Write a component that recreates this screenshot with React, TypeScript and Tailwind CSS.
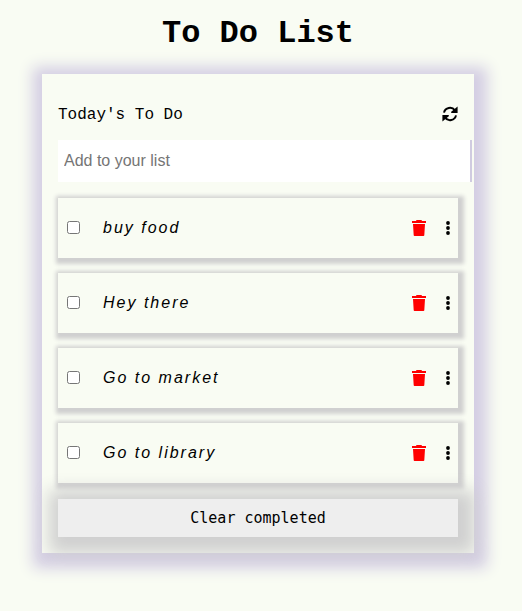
import React from "react";

const items = ["buy food", "Hey there", "Go to market", "Go to library"];

function RefreshIcon() {
  return (
    <svg viewBox="0 0 16 16" className="mt-px size-4" aria-hidden="true">
      <path d="M2 6.6A6.1 6.1 0 0 1 12.9 4.4M14 9.4A6.1 6.1 0 0 1 3.1 11.6" fill="none" stroke="currentColor" strokeWidth="2" />
      <path d="M15.6.6V6.9H9.2V5.7ZM.4 15.4V9.1H6.8V10.3Z" fill="currentColor" />
    </svg>
  );
}

function TrashIcon() {
  return (
    <svg viewBox="0 0 14 16" className="h-4 w-[14px] text-[#ff0000]" fill="currentColor" aria-hidden="true">
      <path d="M4 1 4.5 0H9.5L10 1H14V3H0V1ZM1 4H13L12.3 15.3Q12.2 16 11.5 16H2.5Q1.8 16 1.7 15.3Z" />
    </svg>
  );
}

function DotsIcon() {
  return (
    <svg viewBox="0 0 6 16" className="ml-[19px] h-4 w-[6px]" fill="currentColor" aria-hidden="true">
      <circle cx="3" cy="3" r="1.9" />
      <circle cx="3" cy="8" r="1.9" />
      <circle cx="3" cy="13" r="1.9" />
    </svg>
  );
}

export default function App() {
  return (
    <div className="flex h-[611px] w-[522px] flex-col overflow-hidden bg-[#f9fcf3] text-black">
      <h1 className="mt-4 h-9 pr-1.5 text-center font-['Liberation_Mono',monospace] text-[32px] leading-9 font-bold">
        To Do List
      </h1>
      <main className="mt-[22px] ml-[42px] flex h-[479px] w-[432px] flex-col bg-[#f9fcf3] px-4 pt-[30px] shadow-[2px_4px_14px_11px_#d3cde3]">
        <header className="flex h-9 items-start justify-between pt-px font-['Liberation_Mono',monospace] text-base leading-5">
          <span>Today's To Do</span>
          <RefreshIcon />
        </header>
        <input
          placeholder="Add to your list"
          className="h-[42px] w-[414px] shrink-0 border-r-2 border-[#d0cbe0] bg-white px-1.5 font-['Liberation_Sans',sans-serif] text-base outline-none placeholder:text-[#757575]"
        />
        <ul className="mt-4 flex flex-col gap-[15px]">
          {items.map((item) => (
            <li key={item} className="flex h-[60px] items-center bg-[#f9fcf3] pr-[7px] pl-[9px] shadow-[2px_2px_4px_4px_#d0d0d0]">
              <input type="checkbox" className="mb-[2px] size-[13px]" />
              <span className="ml-[23px] flex-1 font-['Liberation_Sans',sans-serif] text-base tracking-[2px] italic">{item}</span>
              <TrashIcon />
              <DotsIcon />
            </li>
          ))}
        </ul>
        <button className="relative mt-4 h-[38px] shrink-0 bg-[#eeeeee] font-['DejaVu_Sans_Mono',monospace] text-[15px] shadow-[4px_4px_16px_13px_#d0d0d0]">
          Clear completed
        </button>
      </main>
    </div>
  );
}
